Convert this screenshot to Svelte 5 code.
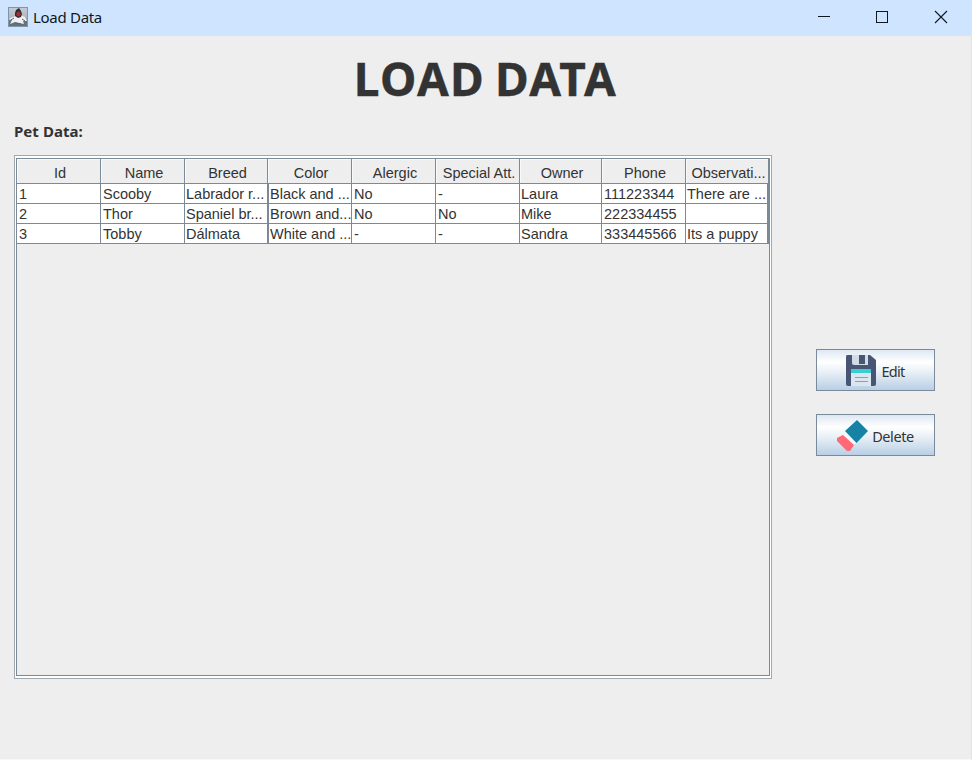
<script>
  const columns = ['Id', 'Name', 'Breed', 'Color', 'Alergic', 'Special Att.', 'Owner', 'Phone', 'Observati...'];
  const rows = [
    ['1', 'Scooby', 'Labrador r...', 'Black and ...', 'No', '-', 'Laura', '111223344', 'There are ...'],
    ['2', 'Thor', 'Spaniel br...', 'Brown and...', 'No', 'No', 'Mike', '222334455', ''],
    ['3', 'Tobby', 'Dálmata', 'White and ...', '-', '-', 'Sandra', '333445566', 'Its a puppy']
  ];
</script>

<div class="window">
  <header class="titlebar">
    <svg class="app-icon" width="20" height="20" viewBox="0 0 20 20">
      <defs>
        <linearGradient id="duke" x1="0" y1="0" x2="0" y2="1">
          <stop offset="0" stop-color="#c3ced8" />
          <stop offset=".5" stop-color="#b3b8bc" />
          <stop offset="1" stop-color="#4f5c68" />
        </linearGradient>
      </defs>
      <rect x=".5" y=".5" width="19" height="19" fill="url(#duke)" stroke="#8096a8" />
      <path d="M1 14l5-3h9l4 3v5H1z" fill="#65717c" />
      <path d="M2 11l6-2 4-1 5 2 2 4-4 0 1 3-5-1-4-1-5 2 2-4-3-1z" fill="#eef1f2" />
      <path d="M8 3l3-2 2 3 1 3-1 3-3 1-3-2 0-3z" fill="#302c31" />
      <ellipse cx="10.500" cy="7" rx="2.2" ry="2.6" fill="#a92b34" />
      <path d="M3 13l3-2M14 12l3 2M7 16l6 1" stroke="#59636c" fill="none" />
    </svg>
    <span class="caption">Load Data</span>
    <svg class="controls" width="132" height="16" viewBox="0 0 132 16" fill="none" stroke="#101820">
      <path d="M1 7.5h12" shape-rendering="crispEdges" />
      <rect x="59.5" y="2.5" width="11" height="11" shape-rendering="crispEdges" />
      <path d="M118 2l12 12M130 2l-12 12" stroke-width="1.1" />
    </svg>
  </header>

  <main>
    <h1>LOAD DATA</h1>
    <h2>Pet Data:</h2>
    <div class="content">
      <div class="scroll">
        <div class="view">
          <div class="row head">
            {#each columns as name}<div class="cell">{name}</div>{/each}
          </div>
          {#each rows as row}
            <div class="row">
              {#each row as value}<div class="cell">{value}</div>{/each}
            </div>
          {/each}
        </div>
      </div>
      <div class="actions">
        <button>
          <svg width="32" height="32" viewBox="0 0 32 32">
            <path d="M2 1h23l6 5v24q0 2-2 2H3q-2 0-2-2V3q0-2 1-2z" fill="#475673" />
            <path d="M7 1h16v10H9q-2 0-2-2z" fill="#d3dbe6" />
            <path d="M14 1h6v9h-6z" fill="#475673" />
            <path d="M6 15h20v17H6z" fill="#dce6f0" />
            <path d="M6 15h20v4H6z" fill="#38cfd2" />
            <path d="M10 23.5h13M10 27.5h13" stroke="#929eae" />
          </svg>
          <span class="edit">Edit</span>
        </button>
        <button>
          <svg width="32" height="32" viewBox="0 0 32 32">
            <path d="M21 1l11 11-11.500 12L9 12z" fill="#1683a5" />
            <path d="M9 13l11 11-3 2L7 16z" fill="#f7f7fa" />
            <path d="M7 16l11 10-4 6h-3L1 22v-3z" fill="#ff6876" />
          </svg>
          <span class="delete">Delete</span>
        </button>
      </div>
    </div>
  </main>
</div>

<style>
  .window {
    box-sizing: border-box;
    width: 972px;
    height: 760px;
    background: #eee;
    border-right: 1px solid #d6e7f8;
    border-bottom: 1px solid #f8f8f8;
    color: #333;
    overflow: hidden;
  }
  .titlebar {
    display: flex;
    align-items: center;
    width: 972px;
    height: 36px;
    box-sizing: border-box;
    padding: 0 23px 0 8px;
    background: #cfe5ff;
  }
  .app-icon { margin-top: -2px; }
  .caption {
    margin-left: 5px;
    padding-bottom: 2px;
    font: 15px/20px 'Noto Sans', sans-serif;
    letter-spacing: -0.3px;
    color: #101820;
  }
  .controls { margin-left: auto; margin-top: -3px; }
  main { padding: 0 14px; }
  h1 {
    margin: 0;
    padding-top: 10px;
    height: 75px;
    font: bold 46px/64px 'Noto Sans', sans-serif;
    letter-spacing: 1.4px;
    word-spacing: -3.5px;
    text-align: center;
    white-space: nowrap;
    -webkit-text-stroke: 0.4px #333;
  }
  h2 {
    margin: 0;
    height: 34px;
    font: bold 15px/20px 'Noto Sans', sans-serif;
    letter-spacing: 0.05px;
  }
  .content { display: flex; }
  .scroll {
    box-sizing: border-box;
    width: 758px;
    height: 524px;
    border: 1px solid #a0a9b1;
    background: #fff;
    padding: 2px 1px 2px 1px;
  }
  .view {
    box-sizing: border-box;
    width: 754px;
    height: 518px;
    border: 1px solid #7a8a99;
    background: #eee;
  }
  .row {
    display: grid;
    grid-template-columns: 84px 84px 83px 84px 84px 84px 82px 84px 83px;
    height: 20px;
    box-sizing: border-box;
    border-bottom: 1px solid #7a8a99;
    background: #fff;
    font: 14.500px/20px 'Liberation Sans', Arial, sans-serif;
  }
  .cell {
    box-sizing: border-box;
    height: 19px;
    padding-left: 2px;
    border-right: 1px solid #7a8a99;
    white-space: nowrap;
    overflow: hidden;
  }
  .cell:nth-child(3),
  .cell:nth-child(7),
  .cell:nth-child(9) { padding-left: 1px; }
  .row:not(.head) .cell:nth-child(3) { border-right-width: 2px; margin-right: -1px; }
  .row:not(.head) .cell:nth-child(9) { border-right-width: 2px; }
  .head { height: 25px; background: #eee; line-height: 28px; }
  .head .cell {
    height: 24px;
    padding-left: 3px;
    text-align: center;
    box-shadow: inset 1px 1px #fafafa;
  }
  .actions {
    display: flex;
    flex-direction: column;
    gap: 23px;
    padding: 194px 0 0 44px;
  }
  button {
    box-sizing: border-box;
    display: flex;
    align-items: center;
    justify-content: center;
    gap: 4px;
    width: 119px;
    height: 42px;
    padding: 0 1px 0 0;
    border: 1px solid #7a8a99;
    background: linear-gradient(#dde8f3 0, #fff 30%, #e9f0f6 55%, #b8cfe5 100%);
    color: #333;
    font: 14.500px/20px 'Noto Sans', sans-serif;
  }
  button span { padding-top: 1px; }
  .edit { letter-spacing: -0.7px; }
  .delete { letter-spacing: -0.4px; }
</style>
